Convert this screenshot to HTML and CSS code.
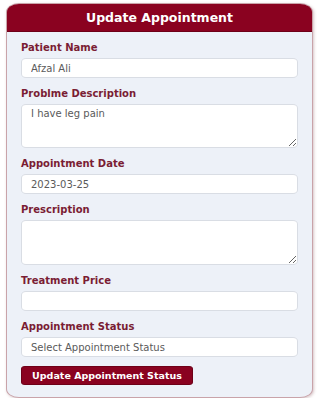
FILE: index.html
```html
<!DOCTYPE html>
<html>
<head>
<meta charset="utf-8">
<link rel="stylesheet" href="styles.css">
</head>
<body>
<div class="card">
  <div class="card-header">Update Appointment</div>
  <form class="card-body">
    <div class="field">
      <label class="label">Patient Name</label>
      <input class="control" type="text" value="Afzal Ali">
    </div>
    <div class="field">
      <label class="label">Problme Description</label>
      <textarea class="control area">I have leg pain</textarea>
    </div>
    <div class="field">
      <label class="label">Appointment Date</label>
      <input class="control" type="text" value="2023-03-25">
    </div>
    <div class="field">
      <label class="label">Prescription</label>
      <textarea class="control area tall"></textarea>
    </div>
    <div class="field">
      <label class="label">Treatment Price</label>
      <input class="control" type="text" value="">
    </div>
    <div class="field">
      <label class="label">Appointment Status</label>
      <div class="control select">Select Appointment Status</div>
    </div>
    <button type="button" class="btn">Update Appointment Status</button>
  </form>
</div>
</body>
</html>
```

FILE: styles.css
```css
html, body {
  margin: 0;
  padding: 0;
  background: #ffffff;
  font-family: "DejaVu Sans", "Liberation Sans", sans-serif;
}

.card {
  margin: 3px 7px 0 6px;
  height: 395px;
  box-sizing: border-box;
  border: 1px solid #c9a3a9;
  border-radius: 13px / 9px;
  background: #edf1f8;
  box-shadow: 1px 1px 3px rgba(120, 60, 70, 0.3);
  overflow: hidden;
}

.card-header {
  height: 28px;
  background: #8a0220;
  color: #ffffff;
  font-weight: 700;
  font-size: 12.5px;
  line-height: 27px;
  text-align: center;
  border-bottom: 1px solid #6e0018;
  box-sizing: border-box;
}

.card-body {
  display: flex;
  flex-direction: column;
  padding: 9px 14px 0 14px;
  margin: 0;
}

.field {
  display: flex;
  flex-direction: column;
  margin-bottom: 9px;
}

.label {
  font-size: 10px;
  font-weight: 700;
  line-height: 12px;
  color: #7a1d34;
  padding-top: 1px;
  margin-bottom: 4px;
}

.control {
  box-sizing: border-box;
  height: 20px;
  width: 100%;
  margin: 0;
  border: 1px solid #d9dde4;
  border-radius: 5px / 4px;
  background: #ffffff;
  padding: 0 9px;
  font-family: "DejaVu Sans", "Liberation Sans", sans-serif;
  font-size: 10px;
  color: #5a5a5a;
  outline: none;
}

.area {
  display: block;
  height: 44px;
  padding: 3px 9px;
  resize: vertical;
  line-height: 12px;
}

.tall {
  height: 45px;
}

.select {
  display: flex;
  align-items: center;
}

.btn {
  align-self: flex-start;
  height: 19px;
  width: 172px;
  padding: 0;
  margin: 0;
  border: 1px solid #6e0018;
  border-radius: 4px / 3px;
  background: #8a0220;
  color: #ffffff;
  font-family: "DejaVu Sans", "Liberation Sans", sans-serif;
  font-size: 9.5px;
  font-weight: 700;
  white-space: nowrap;
}
```
